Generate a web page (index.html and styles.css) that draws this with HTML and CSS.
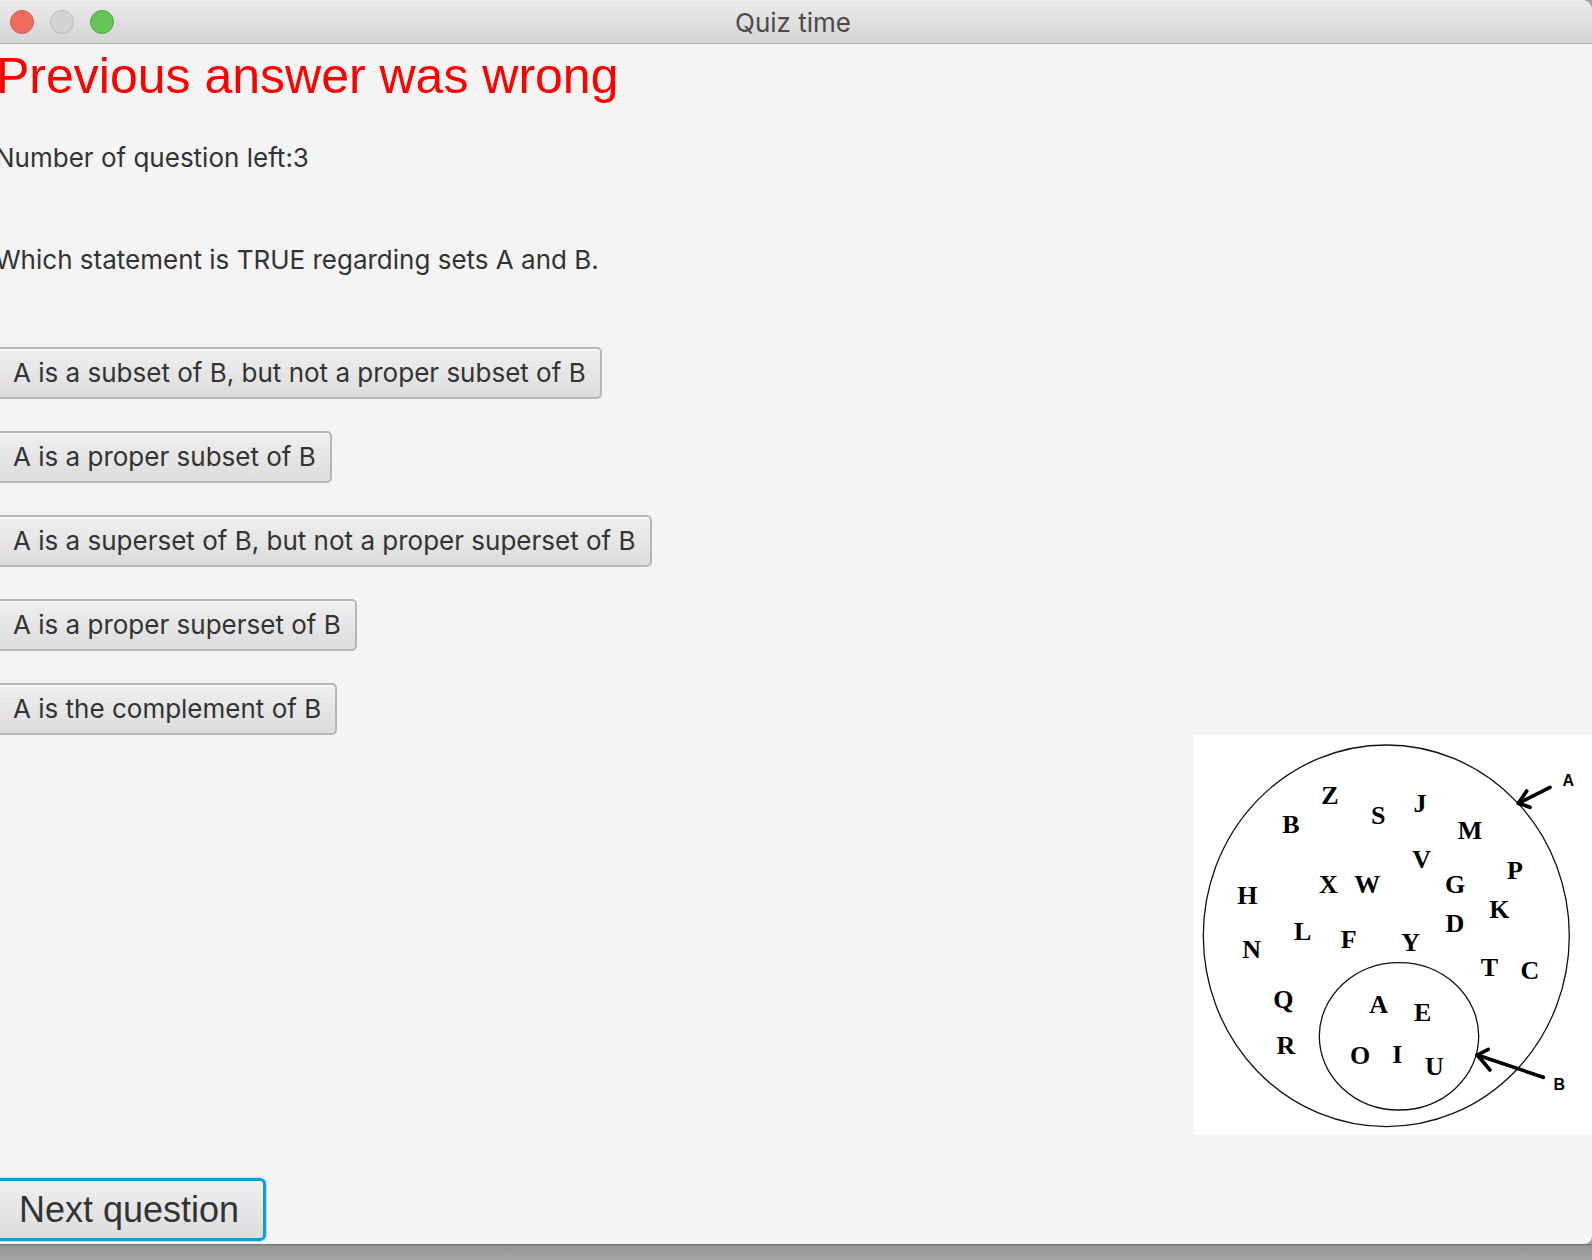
FILE: index.html
```html
<!DOCTYPE html>
<html>
<head>
<meta charset="utf-8">
<title>Quiz time</title>
<link rel="stylesheet" href="styles.css">
</head>
<body>
<div class="window">
  <div class="titlebar">
    <div class="lights">
      <span class="light red"></span>
      <span class="light gray"></span>
      <span class="light green"></span>
    </div>
    <div class="title">Quiz time</div>
    <div></div>
  </div>
  <div class="content">
    <h1 class="status">Previous answer was wrong</h1>
    <p class="count">Number of question left:3</p>
    <p class="question">Which statement is TRUE regarding sets A and B.</p>
    <div class="answers">
      <button class="answer">A is a subset of B, but not a proper subset of B</button>
      <button class="answer">A is a proper subset of B</button>
      <button class="answer">A is a superset of B, but not a proper superset of B</button>
      <button class="answer">A is a proper superset of B</button>
      <button class="answer">A is the complement of B</button>
    </div>
    <div class="figure-row">
      <svg class="venn" width="398" height="400" viewBox="0 0 398 400">
        <rect x="0" y="0" width="398" height="400" fill="#ffffff"/>
        <ellipse cx="192.3" cy="200.8" rx="183" ry="190.8" fill="none" stroke="#111" stroke-width="1.3"/>
        <ellipse cx="205" cy="301.3" rx="79.7" ry="73.7" fill="none" stroke="#111" stroke-width="1.3"/>
        <g class="letters" text-anchor="middle">
          <text x="136" y="69">Z</text>
          <text x="97" y="97.7">B</text>
          <text x="184.3" y="89.3">S</text>
          <text x="226" y="76.7">J</text>
          <text x="276" y="104">M</text>
          <text x="227.7" y="133.3">V</text>
          <text x="321" y="144.3">P</text>
          <text x="134.3" y="157.7">X</text>
          <text x="173.3" y="158.3">W</text>
          <text x="261" y="157.7">G</text>
          <text x="53.3" y="169">H</text>
          <text x="305.3" y="183.3">K</text>
          <text x="261" y="197.3">D</text>
          <text x="108.7" y="205">L</text>
          <text x="154.7" y="213.3">F</text>
          <text x="216.7" y="215.7">Y</text>
          <text x="57.7" y="222.7">N</text>
          <text x="295.3" y="241">T</text>
          <text x="336" y="244.3">C</text>
          <text x="89.3" y="273.3">Q</text>
          <text x="184.7" y="277.7">A</text>
          <text x="228.7" y="286">E</text>
          <text x="92" y="319">R</text>
          <text x="166" y="329">O</text>
          <text x="203.3" y="328.3">I</text>
          <text x="240.3" y="340.3">U</text>
        </g>
        <g class="labels" text-anchor="middle">
          <text x="374.3" y="51">A</text>
          <text x="365.3" y="355">B</text>
        </g>
        <g fill="none" stroke="#000" stroke-width="3.6" stroke-linecap="round" stroke-linejoin="round">
          <path d="M356 52.3 L324.3 68.3"/>
          <path d="M332.7 56 L324.3 68.3 L336 72.3"/>
          <path d="M349.3 342.3 L283.3 320"/>
          <path d="M294.3 314.3 L283.3 320 L296 335"/>
        </g>
      </svg>
    </div>
    <button class="next">Next question</button>
  </div>
</div>
<div class="desk"></div>
</body>
</html>
```

FILE: styles.css
```css
html, body {
  margin: 0;
  padding: 0;
}

body {
  width: 1592px;
  height: 1260px;
  overflow: hidden;
  background: #a2a2a2;
  font-family: Inter, "Noto Sans", sans-serif;
}

.window {
  height: 1244px;
  background: #f4f4f4;
  border-top-right-radius: 10px;
  border-bottom-right-radius: 8px;
  overflow: hidden;
  display: flex;
  flex-direction: column;
}

.titlebar {
  height: 43px;
  flex: none;
  border-bottom: 1px solid #b0b0b0;
  background: linear-gradient(#ebebeb, #d4d4d4);
  display: grid;
  grid-template-columns: 1fr auto 1fr;
  align-items: center;
}

.lights {
  display: flex;
  gap: 16px;
  padding-left: 10px;
  align-items: center;
}

.light {
  width: 22px;
  height: 22px;
  border-radius: 50%;
  border: 1px solid;
  display: block;
}

.light.red {
  background: #ef6b5f;
  border-color: #d65a50;
}

.light.gray {
  background: #d3d3d3;
  border-color: #b9b9b9;
}

.light.green {
  background: #63c655;
  border-color: #51a844;
}

.title {
  font-size: 26px;
  color: #4b4b4b;
  line-height: 30px;
  padding-right: 6px;
  padding-top: 2px;
}

.content {
  margin-left: -5px;
  display: flex;
  flex-direction: column;
  align-items: flex-start;
  flex: 1;
}

.status {
  margin: 4px 0 0 1px;
  font-family: "Liberation Sans", Arial, sans-serif;
  font-weight: normal;
  font-size: 50px;
  line-height: 56px;
  color: #ff0000;
}

.count {
  margin: 38px 0 0 0;
  font-size: 26px;
  line-height: 32px;
  color: #333333;
}

.question {
  margin: 70px 0 0 0;
  font-size: 26px;
  line-height: 32px;
  color: #333333;
}

.answers {
  margin-top: 71px;
  display: flex;
  flex-direction: column;
  align-items: flex-start;
  gap: 32px;
}

.answer {
  height: 52px;
  box-sizing: border-box;
  padding: 0 14px 0 16px;
  border: 2px solid #b6b6b6;
  border-radius: 5px;
  background: linear-gradient(#efefef, #dcdcdc);
  box-shadow: inset 0 1px 0 #ffffff;
  font-family: Inter, "Noto Sans", sans-serif;
  font-size: 26px;
  line-height: 30px;
  color: #333333;
  display: flex;
  align-items: center;
  white-space: nowrap;
}

.figure-row {
  align-self: stretch;
  display: flex;
  justify-content: flex-end;
}

.venn {
  display: block;
}

.letters text {
  font-family: "Liberation Serif", "DejaVu Serif", serif;
  font-weight: bold;
  font-size: 26px;
  fill: #000;
}

.labels text {
  font-family: "Liberation Sans", Arial, sans-serif;
  font-weight: bold;
  font-size: 16px;
  fill: #000;
}

.next {
  margin-top: 43px;
  height: 63px;
  box-sizing: border-box;
  padding: 0 24px 0 21px;
  border: 3px solid #0a9fd8;
  border-radius: 6px;
  background: linear-gradient(#efefef, #dcdcdc);
  box-shadow: 0 0 0 1px #b9e0f0, inset 0 1px 0 #ffffff;
  font-family: "Liberation Sans", Arial, sans-serif;
  font-size: 36px;
  line-height: 40px;
  color: #333333;
  white-space: nowrap;
}

.desk {
  height: 16px;
  background: linear-gradient(#6e6e6e, #959595 2px, #a6a6a6);
}
```
